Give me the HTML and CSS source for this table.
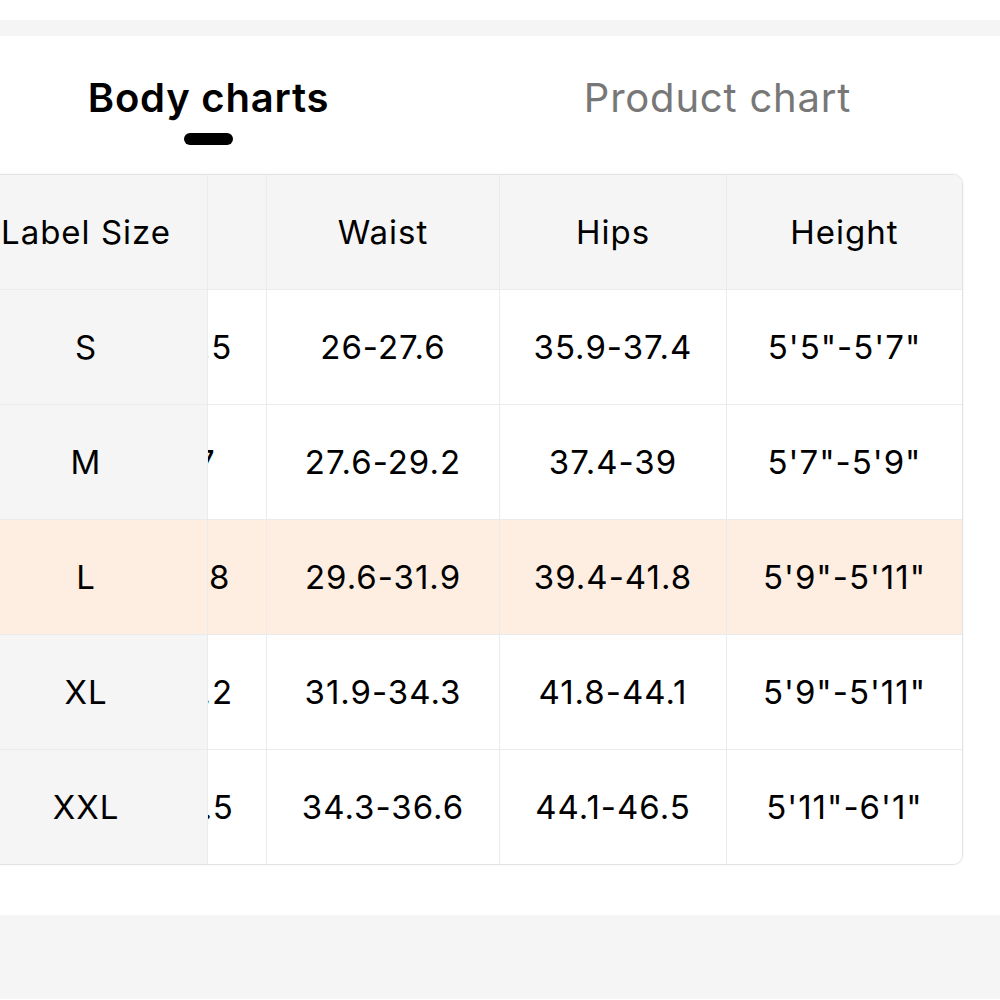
FILE: index.html
```html
<!DOCTYPE html>
<html lang="en">
<head>
    <meta charset="UTF-8">
    <meta name="viewport" content="width=device-width, initial-scale=1.0">
    <title>Size guide</title>
    <link rel="stylesheet" href="styles.css">
</head>
<body>

    <div class="top-gap"></div>
    <div class="band"></div>

    <div class="tabs">
        <div class="tab active">
            <span class="tab-name">Body charts</span>
            <span class="tab-bar"></span>
        </div>
        <div class="tab">
            <span class="tab-name">Product chart</span>
        </div>
    </div>

    <div class="chart">
        <div class="row head">
            <div class="cell label">Label Size</div>
            <div class="cell bust">Bust</div>
            <div class="cell waist">Waist</div>
            <div class="cell hips">Hips</div>
            <div class="cell height">Height</div>
        </div>
        <div class="row">
            <div class="cell label">S</div>
            <div class="cell bust">32.3-33.5</div>
            <div class="cell waist">26-27.6</div>
            <div class="cell hips">35.9-37.4</div>
            <div class="cell height">5'5"-5'7"</div>
        </div>
        <div class="row">
            <div class="cell label">M</div>
            <div class="cell bust">35.5-37</div>
            <div class="cell waist">27.6-29.2</div>
            <div class="cell hips">37.4-39</div>
            <div class="cell height">5'7"-5'9"</div>
        </div>
        <div class="row picked">
            <div class="cell label">L</div>
            <div class="cell bust">37.4-39.8</div>
            <div class="cell waist">29.6-31.9</div>
            <div class="cell hips">39.4-41.8</div>
            <div class="cell height">5'9"-5'11"</div>
        </div>
        <div class="row">
            <div class="cell label">XL</div>
            <div class="cell bust">39.8-42.2</div>
            <div class="cell waist">31.9-34.3</div>
            <div class="cell hips">41.8-44.1</div>
            <div class="cell height">5'9"-5'11"</div>
        </div>
        <div class="row">
            <div class="cell label">XXL</div>
            <div class="cell bust">42.2-44.5</div>
            <div class="cell waist">34.3-36.6</div>
            <div class="cell hips">44.1-46.5</div>
            <div class="cell height">5'11"-6'1"</div>
        </div>
    </div>

    <div class="bottom-band"></div>

</body>
</html>
```

FILE: styles.css
```css
body {
    font-family: Inter, "Liberation Sans", sans-serif;
    background-color: white;
    color: #000;
    margin: 0;
    overflow: hidden;
}

.top-gap {
    height: 20px;
}

.band {
    height: 16px;
    background-color: #f5f5f5;
}

.tabs {
    display: flex;
    margin-left: -46px;
    padding-top: 39px;
}

.tab {
    width: 509px;
    display: flex;
    flex-direction: column;
    align-items: center;
}

.tab-name {
    font-size: 40px;
    line-height: 46px;
    letter-spacing: 0.8px;
    color: #777;
}

.tab.active .tab-name {
    color: #000;
    font-weight: 600;
}

.tab-bar {
    width: 49px;
    height: 12px;
    margin-top: 12px;
    border-radius: 6px;
    background-color: #000;
}

.chart {
    margin: 29px 0 0 -36px;
    width: 997px;
    border: 1px solid #e2e2e2;
    border-radius: 10px;
    box-shadow: 0 0 2px rgba(0, 0, 0, 0.08);
    overflow: hidden;
}

.row {
    display: grid;
    grid-template-columns: 71px 172px 59px 233px 227px 235px;
    height: 115px;
    box-sizing: border-box;
    border-bottom: 1px solid #ebebeb;
    background-color: white;
}

.row:last-child {
    border-bottom: none;
    height: 114px;
}

.head,
.head .label {
    background-color: #f5f5f5;
}

.cell {
    grid-row: 1;
    display: flex;
    align-items: center;
    justify-content: center;
    font-size: 33px;
    letter-spacing: 1px;
    white-space: nowrap;
    border-right: 1px solid #ebebeb;
}

.label {
    grid-column: 1 / 3;
    background-color: #f5f5f5;
    z-index: 1;
}

.bust { grid-column: 2 / 4; }
.waist { grid-column: 4; }
.hips { grid-column: 5; }
.height { grid-column: 6; border-right: none; }

.row.picked,
.row.picked .label {
    background-color: #fdeee1;
}

.bottom-band {
    margin-top: 50px;
    height: 84px;
    background-color: #f5f5f5;
}
```
